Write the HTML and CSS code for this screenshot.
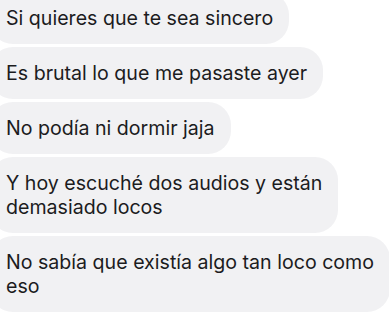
FILE: index.html
```html
<!DOCTYPE html>
<html lang="es">
<head>
<meta charset="utf-8">
<link rel="stylesheet" href="styles.css">
</head>
<body>
<div class="thread">
  <div class="bubble">Si quieres que te sea sincero</div>
  <div class="bubble">Es brutal lo que me pasaste ayer</div>
  <div class="bubble">No podía ni dormir jaja</div>
  <div class="bubble">Y hoy escuché dos audios y están<br>demasiado locos</div>
  <div class="bubble">No sabía que existía algo tan loco como<br>eso</div>
</div>
</body>
</html>
```
FILE: styles.css
```css
html, body {
  margin: 0;
  padding: 0;
  background: #ffffff;
}
body {
  width: 389px;
  height: 315px;
  overflow: hidden;
}
.thread {
  display: flex;
  flex-direction: column;
  align-items: flex-start;
  gap: 3px;
  margin-top: -8px;
  margin-left: -10px;
}
.bubble {
  background: #f1f1f3;
  color: #1c1c1e;
  font-family: "Inter", "Liberation Sans", sans-serif;
  font-size: 19.6px;
  line-height: 24px;
  padding: 14px 16px;
  border-radius: 23px;
  white-space: nowrap;
}
```
